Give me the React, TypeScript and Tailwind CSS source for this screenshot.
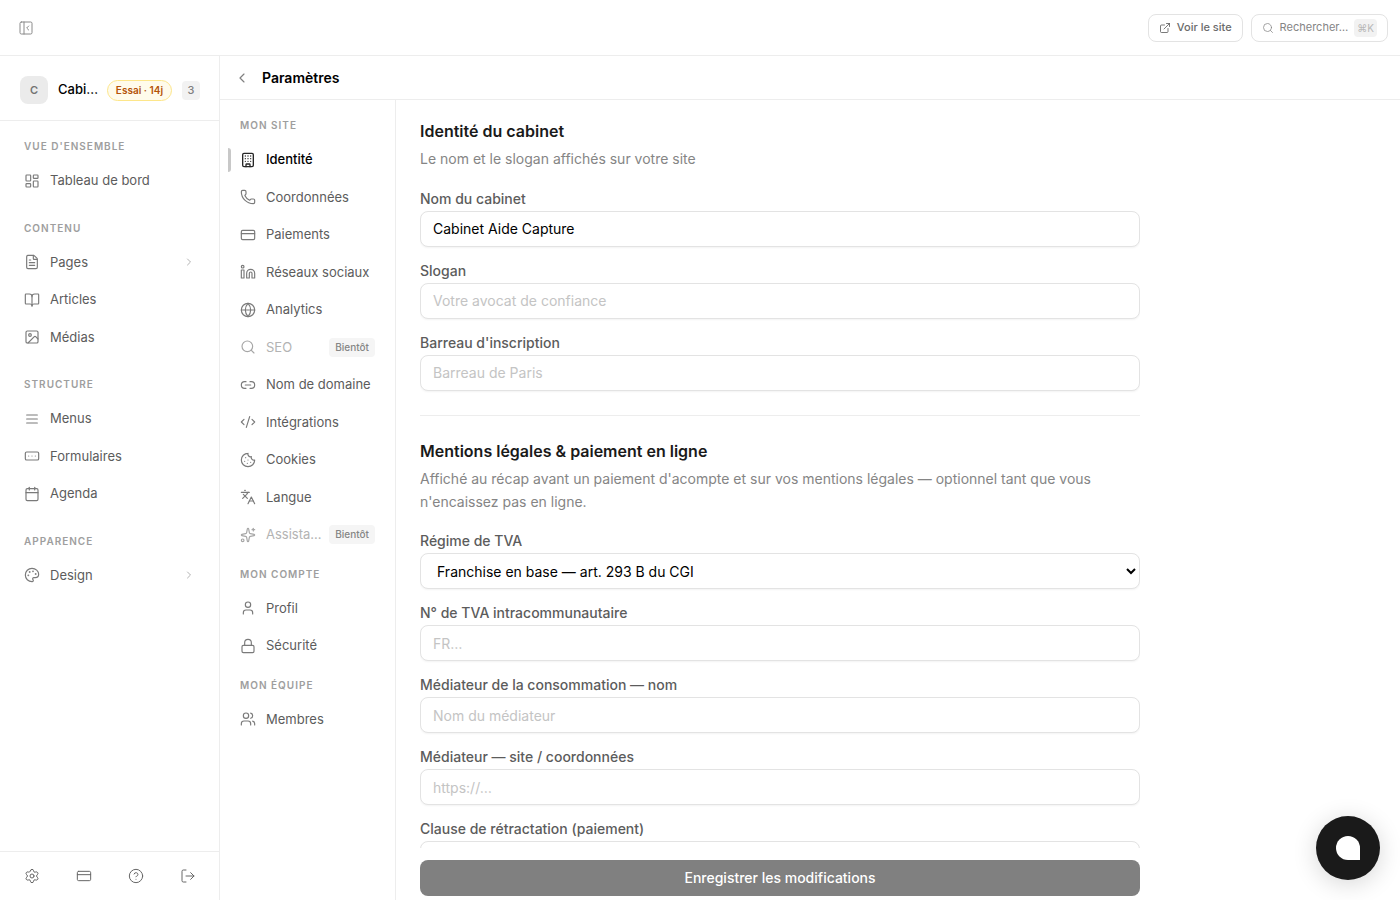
import type { ComponentType } from "react";
import {
  BookOpen,
  Building,
  Calendar,
  ChevronLeft,
  ChevronRight,
  CircleHelp,
  CodeXml,
  Cookie,
  CreditCard,
  ExternalLink,
  FileText,
  Globe,
  Image,
  Languages,
  LayoutDashboard,
  Link2,
  Linkedin,
  Lock,
  LogOut,
  Palette,
  PanelLeftClose,
  Phone,
  RectangleEllipsis,
  Search,
  Settings,
  Sparkles,
  User,
  Users,
} from "lucide-react";

type IconProps = { size?: number; strokeWidth?: number; className?: string };

type NavItem = {
  label: string;
  icon: ComponentType<IconProps>;
  active?: boolean;
  soon?: boolean;
  expandable?: boolean;
};

type NavGroup = { title: string; items: NavItem[] };

function MenuIcon({ size = 24, strokeWidth = 2, className }: IconProps) {
  return (
    <svg
      width={size}
      height={size}
      viewBox="0 0 24 24"
      fill="none"
      stroke="currentColor"
      strokeWidth={strokeWidth}
      strokeLinecap="round"
      className={className}
      aria-hidden="true"
    >
      <path d="M4 6h16M4 12h16M4 18h16" />
    </svg>
  );
}

const mainNav: NavGroup[] = [
  {
    title: "Vue d'ensemble",
    items: [{ label: "Tableau de bord", icon: LayoutDashboard }],
  },
  {
    title: "Contenu",
    items: [
      { label: "Pages", icon: FileText, expandable: true },
      { label: "Articles", icon: BookOpen },
      { label: "Médias", icon: Image },
    ],
  },
  {
    title: "Structure",
    items: [
      { label: "Menus", icon: MenuIcon },
      { label: "Formulaires", icon: RectangleEllipsis },
      { label: "Agenda", icon: Calendar },
    ],
  },
  {
    title: "Apparence",
    items: [{ label: "Design", icon: Palette, expandable: true }],
  },
];

const settingsNav: NavGroup[] = [
  {
    title: "Mon site",
    items: [
      { label: "Identité", icon: Building, active: true },
      { label: "Coordonnées", icon: Phone },
      { label: "Paiements", icon: CreditCard },
      { label: "Réseaux sociaux", icon: Linkedin },
      { label: "Analytics", icon: Globe },
      { label: "SEO", icon: Search, soon: true },
      { label: "Nom de domaine", icon: Link2 },
      { label: "Intégrations", icon: CodeXml },
      { label: "Cookies", icon: Cookie },
      { label: "Langue", icon: Languages },
      { label: "Assista…", icon: Sparkles, soon: true },
    ],
  },
  {
    title: "Mon compte",
    items: [
      { label: "Profil", icon: User },
      { label: "Sécurité", icon: Lock },
    ],
  },
  {
    title: "Mon équipe",
    items: [{ label: "Membres", icon: Users }],
  },
];

const footerActions = [
  { label: "Paramètres", icon: Settings },
  { label: "Facturation", icon: CreditCard },
  { label: "Aide", icon: CircleHelp },
  { label: "Déconnexion", icon: LogOut },
];

const fieldClass =
  "block h-9 w-full rounded-lg border border-[#e3e3e3] bg-white px-3 text-sm text-black shadow-xs placeholder:text-[#c4c4c4]";

function NavLink({ item }: { item: NavItem }) {
  const Icon = item.icon;
  const tone = item.active
    ? "font-medium text-black"
    : item.soon
      ? "text-[#b3b3b3]"
      : "text-[#5c5c5c]";
  const iconTone = item.active ? "text-[#262626]" : item.soon ? "text-[#a6a6a6]" : "text-[#7a7a7a]";

  return (
    <a
      href="#"
      aria-current={item.active ? "page" : undefined}
      aria-disabled={item.soon}
      className={`relative flex items-center gap-2.5 rounded-lg px-3 py-2 text-[13px] leading-normal ${tone}`}
    >
      {item.active && <span className="absolute inset-y-1.5 left-0 w-[3px] rounded-r-sm bg-[#c8c8c8]" />}
      <Icon size={16} strokeWidth={item.active ? 2 : 1.75} className={`shrink-0 ${iconTone}`} />
      <span className="min-w-0 flex-1 whitespace-nowrap">{item.label}</span>
      {item.soon && (
        <span className="-my-px rounded bg-[#f5f5f5] px-1.5 text-[10px] leading-[19px] font-medium text-[#858585]">
          Bientôt
        </span>
      )}
      {item.expandable && <ChevronRight size={12} strokeWidth={2} className="text-[#b3b3b3]" />}
    </a>
  );
}

function NavSection({ group }: { group: NavGroup }) {
  return (
    <section>
      <h3 className="mb-2 px-3 text-[10px] leading-[18px] font-semibold tracking-widest text-[#9e9e9e] uppercase">
        {group.title}
      </h3>
      <ul className="flex flex-col gap-0.5">
        {group.items.map((item) => (
          <li key={item.label}>
            <NavLink item={item} />
          </li>
        ))}
      </ul>
    </section>
  );
}

function TextField({
  id,
  label,
  placeholder,
  value,
}: {
  id: string;
  label: string;
  placeholder?: string;
  value?: string;
}) {
  return (
    <div>
      <FieldLabel id={id}>{label}</FieldLabel>
      <input id={id} type="text" defaultValue={value} placeholder={placeholder} className={fieldClass} />
    </div>
  );
}

function FieldLabel({ id, children }: { id: string; children: string }) {
  return (
    <label htmlFor={id} className="mb-1 block text-sm leading-4 font-medium text-[#5c5c5c]">
      {children}
    </label>
  );
}

function FormHeading({ title, desc }: { title: string; desc: string }) {
  return (
    <div className="mb-5">
      <h2 className="mb-1.5 text-base leading-[22px] font-semibold text-[#1a1a1a]">{title}</h2>
      <p className="text-sm leading-relaxed text-[#858585]">{desc}</p>
    </div>
  );
}

function TopBar() {
  return (
    <header className="flex h-14 shrink-0 items-center justify-between border-b border-[#ededed] pr-3 pl-2.5">
      <button type="button" aria-label="Réduire le menu" className="flex size-8 items-center justify-center text-[#8a8a8a]">
        <PanelLeftClose size={16} strokeWidth={1.5} />
      </button>
      <div className="flex items-center gap-2">
        <a
          href="#"
          className="flex h-7 items-center gap-1.5 rounded-lg border border-[#e3e3e3] px-2.5 text-[11px] font-medium text-[#6b6b6b]"
        >
          <ExternalLink size={12} strokeWidth={1.5} className="text-[#4d4d4d]" />
          Voir le site
        </a>
        <button
          type="button"
          className="flex h-7 items-center gap-1.5 rounded-lg border border-[#e3e3e3] px-2.5 text-[11px] text-[#858585]"
        >
          <Search size={12} strokeWidth={1.5} />
          Rechercher…
          <kbd className="rounded bg-[#f2f2f2] px-[3px] font-[inherit] text-[10px] leading-[18px] text-[#b8b8b8]">⌘K</kbd>
        </button>
      </div>
    </header>
  );
}

function Sidebar() {
  return (
    <aside className="flex w-[220px] shrink-0 flex-col border-r border-[#ededed]">
      <div className="flex shrink-0 items-center gap-2.5 border-b border-[#ededed] pt-5 pr-[19px] pb-4 pl-5">
        <span className="flex size-7 shrink-0 items-center justify-center rounded-lg bg-[#ebebeb] text-[11px] font-semibold text-[#737373]">
          C
        </span>
        <span className="min-w-0 flex-1 text-[13px] font-medium whitespace-nowrap text-black" title="Cabinet Aide Capture">
          Cabi…
        </span>
        <span className="shrink-0 rounded-full border border-[#fde68a] bg-[#fffbeb] px-2 text-[10px] leading-[19px] font-semibold text-[#b45309]">
          Essai · 14j
        </span>
        <span className="w-[18px] rounded bg-[#f2f2f2] text-center text-[11px] leading-[19px] font-medium text-[#808080]">
          3
        </span>
      </div>
      <nav aria-label="Navigation principale" className="flex min-h-0 flex-1 flex-col gap-5 overflow-y-auto px-3 pt-4">
        {mainNav.map((group) => (
          <NavSection key={group.title} group={group} />
        ))}
      </nav>
      <div className="flex h-[49px] shrink-0 items-center gap-5 border-t border-[#ededed] pl-4">
        {footerActions.map(({ label, icon: Icon }) => (
          <button
            key={label}
            type="button"
            aria-label={label}
            className="flex size-8 items-center justify-center text-[#666666]"
          >
            <Icon size={16} strokeWidth={1.5} />
          </button>
        ))}
      </div>
    </aside>
  );
}

function IdentityForm() {
  return (
    <form className="flex min-w-0 flex-1 flex-col px-6">
      <div className="min-h-0 w-full max-w-[720px] flex-1 overflow-y-auto pt-5 [scrollbar-width:none]">
        <section className="border-b border-[#ededed] pb-6">
          <FormHeading title="Identité du cabinet" desc="Le nom et le slogan affichés sur votre site" />
          <div className="flex flex-col gap-4">
            <TextField id="nom" label="Nom du cabinet" value="Cabinet Aide Capture" />
            <TextField id="slogan" label="Slogan" placeholder="Votre avocat de confiance" />
            <TextField id="barreau" label="Barreau d'inscription" placeholder="Barreau de Paris" />
          </div>
        </section>

        <section className="pt-6 pb-6">
          <FormHeading
            title="Mentions légales & paiement en ligne"
            desc="Affiché au récap avant un paiement d'acompte et sur vos mentions légales — optionnel tant que vous n'encaissez pas en ligne."
          />
          <div className="flex flex-col gap-4">
            <div>
              <FieldLabel id="tva">Régime de TVA</FieldLabel>
              <select id="tva" className={fieldClass}>
                <option>Franchise en base — art. 293 B du CGI</option>
                <option>Assujetti à la TVA</option>
              </select>
            </div>
            <TextField id="numero-tva" label="N° de TVA intracommunautaire" placeholder="FR…" />
            <TextField id="mediateur" label="Médiateur de la consommation — nom" placeholder="Nom du médiateur" />
            <TextField id="mediateur-site" label="Médiateur — site / coordonnées" placeholder="https://…" />
            <div>
              <FieldLabel id="clause">Clause de rétractation (paiement)</FieldLabel>
              <textarea
                id="clause"
                rows={4}
                className="block w-full rounded-lg border border-[#e3e3e3] bg-white px-3 py-2 text-sm text-black shadow-xs"
              />
            </div>
          </div>
        </section>
      </div>
      <div className="w-full max-w-[720px] shrink-0 pt-3 pb-1">
        <button type="submit" className="h-9 w-full rounded-lg bg-[#808080] text-sm font-medium text-white">
          Enregistrer les modifications
        </button>
      </div>
    </form>
  );
}

export default function App() {
  return (
    <div className="flex h-screen flex-col bg-white font-['Inter','Liberation_Sans',sans-serif]">
      <TopBar />
      <div className="flex min-h-0 flex-1">
        <Sidebar />
        <main className="flex min-w-0 flex-1 flex-col">
          <div className="flex h-11 shrink-0 items-center gap-2 border-b border-[#ededed] px-2.5">
            <button type="button" aria-label="Retour" className="flex size-6 items-center justify-center text-[#808080]">
              <ChevronLeft size={16} strokeWidth={1.75} />
            </button>
            <h1 className="text-sm font-semibold text-black">Paramètres</h1>
          </div>
          <div className="flex min-h-0 flex-1">
            <nav
              aria-label="Paramètres"
              className="flex w-44 shrink-0 flex-col gap-3 overflow-y-auto border-r border-[#ededed] px-2 pt-4"
            >
              {settingsNav.map((group) => (
                <NavSection key={group.title} group={group} />
              ))}
            </nav>
            <IdentityForm />
          </div>
        </main>
      </div>

      {/* Chat launcher */}
      <button
        type="button"
        aria-label="Ouvrir le chat"
        className="fixed right-5 bottom-5 flex size-16 items-center justify-center rounded-full bg-[#1a1a1a] shadow-[0_4px_24px_rgba(0,0,0,0.16)]"
      >
        <span className="size-6 rounded-full rounded-br-none bg-white" />
      </button>
    </div>
  );
}
